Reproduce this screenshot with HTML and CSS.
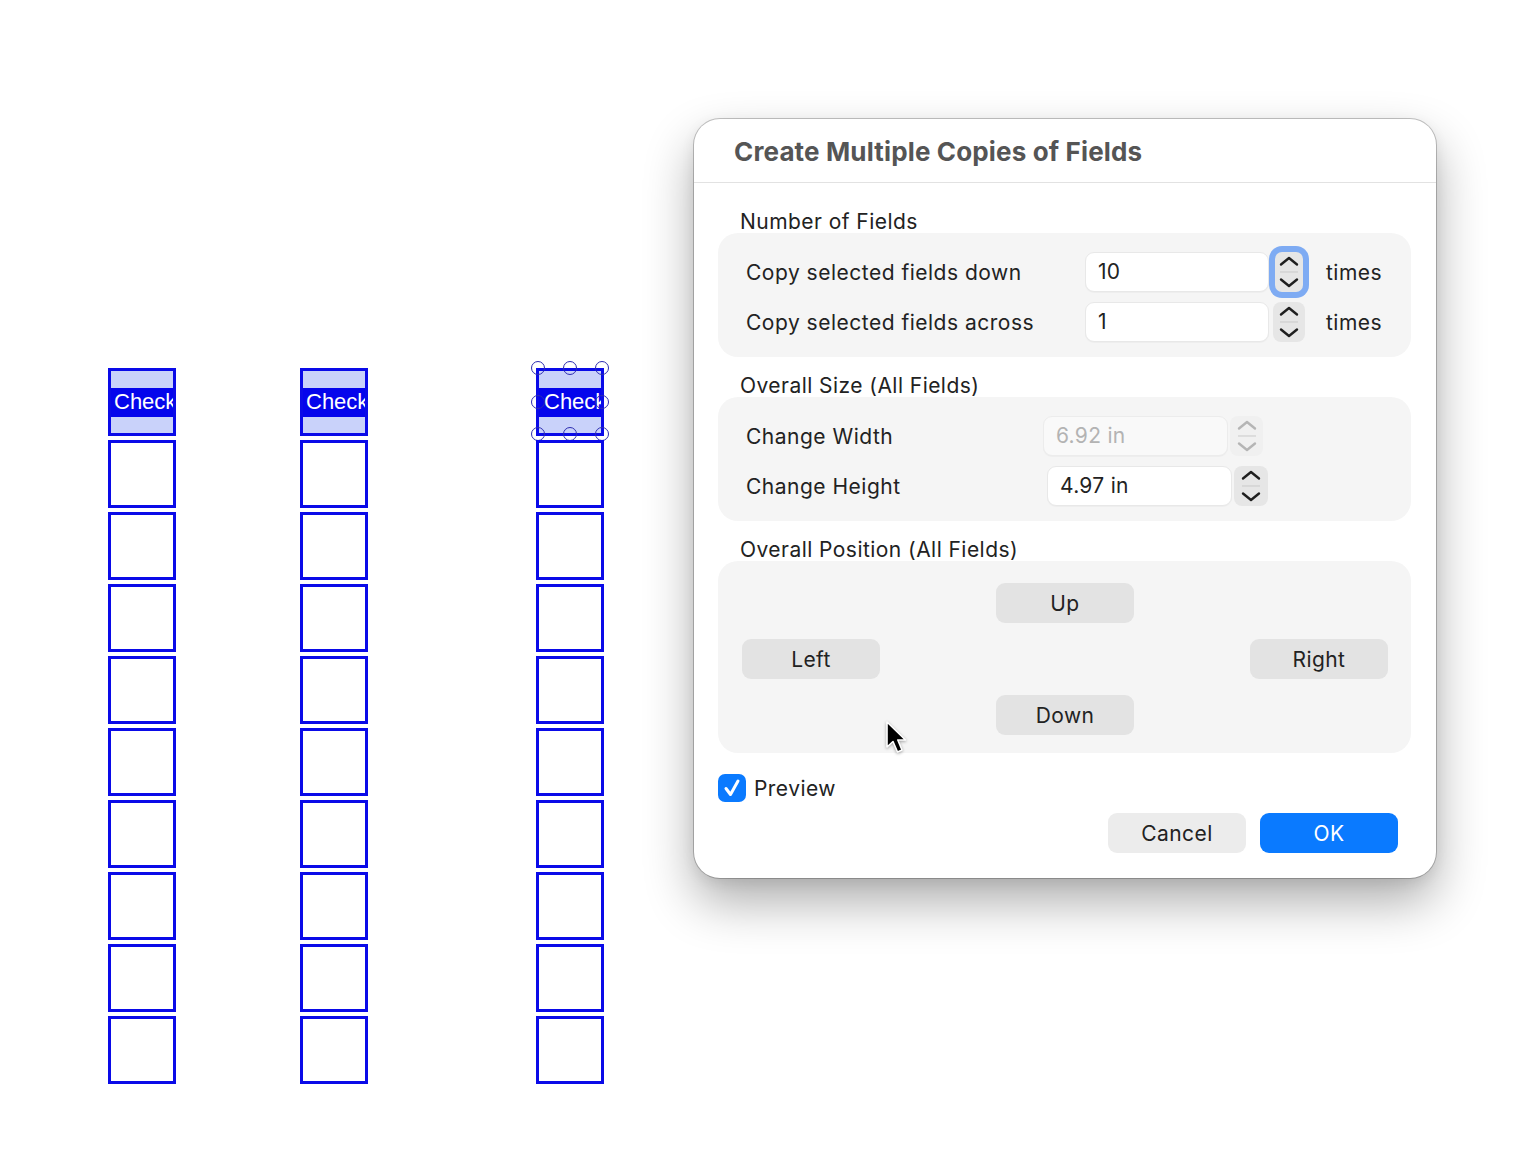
FILE: index.html
```html
<!DOCTYPE html>
<html>
<head>
<meta charset="utf-8">
<link rel="stylesheet" href="styles.css">
</head>
<body>
<div class="canvas">
  <div class="col col-1">
    <div class="field sel"><div class="band"></div><div class="cap">Check</div><div class="band"></div></div>
    <div class="field"></div><div class="field"></div><div class="field"></div><div class="field"></div>
    <div class="field"></div><div class="field"></div><div class="field"></div><div class="field"></div><div class="field"></div>
  </div>
  <div class="col col-2">
    <div class="field sel"><div class="band"></div><div class="cap">Check</div><div class="band"></div></div>
    <div class="field"></div><div class="field"></div><div class="field"></div><div class="field"></div>
    <div class="field"></div><div class="field"></div><div class="field"></div><div class="field"></div><div class="field"></div>
  </div>
  <div class="col col-3">
    <div class="field sel handles"><div class="band"></div><div class="cap cap-3">Check</div><div class="band"></div>
      <span class="h h-tl"></span><span class="h h-tc"></span><span class="h h-tr"></span>
      <span class="h h-ml"></span><span class="h h-mr"></span>
      <span class="h h-bl"></span><span class="h h-bc"></span><span class="h h-br"></span>
    </div>
    <div class="field"></div><div class="field"></div><div class="field"></div><div class="field"></div>
    <div class="field"></div><div class="field"></div><div class="field"></div><div class="field"></div><div class="field"></div>
  </div>

  <div class="dialog">
    <div class="dlg-head">Create Multiple Copies of Fields</div>
    <div class="dlg-body">
      <div class="sec-label">Number of Fields</div>
      <div class="group group-num">
        <div class="row">
          <span class="row-label">Copy selected fields down</span>
          <span class="input">10</span>
          <span class="stepper focus">
            <svg width="24" height="38" viewBox="0 0 24 38"><path d="M4 11.5 L12 5 L20 11.5" class="chev"/><line x1="3" y1="19" x2="21" y2="19" class="div"/><path d="M4 26.5 L12 33 L20 26.5" class="chev"/></svg>
          </span>
          <span class="unit">times</span>
        </div>
        <div class="row">
          <span class="row-label">Copy selected fields across</span>
          <span class="input">1</span>
          <span class="stepper">
            <svg width="24" height="38" viewBox="0 0 24 38"><path d="M4 11.5 L12 5 L20 11.5" class="chev"/><line x1="3" y1="19" x2="21" y2="19" class="div"/><path d="M4 26.5 L12 33 L20 26.5" class="chev"/></svg>
          </span>
          <span class="unit">times</span>
        </div>
      </div>

      <div class="sec-label">Overall Size (All Fields)</div>
      <div class="group group-size">
        <div class="row">
          <span class="row-label">Change Width</span>
          <span class="input disabled">6.92 in</span>
          <span class="stepper disabled">
            <svg width="24" height="38" viewBox="0 0 24 38"><path d="M4 11.5 L12 5 L20 11.5" class="chev"/><line x1="3" y1="19" x2="21" y2="19" class="div"/><path d="M4 26.5 L12 33 L20 26.5" class="chev"/></svg>
          </span>
        </div>
        <div class="row shift">
          <span class="row-label">Change Height</span>
          <span class="input">4.97 in</span>
          <span class="stepper">
            <svg width="24" height="38" viewBox="0 0 24 38"><path d="M4 11.5 L12 5 L20 11.5" class="chev"/><line x1="3" y1="19" x2="21" y2="19" class="div"/><path d="M4 26.5 L12 33 L20 26.5" class="chev"/></svg>
          </span>
        </div>
      </div>

      <div class="sec-label">Overall Position (All Fields)</div>
      <div class="group group-pos">
        <button class="btn b-up">Up</button>
        <button class="btn b-left">Left</button>
        <button class="btn b-right">Right</button>
        <button class="btn b-down">Down</button>
      </div>

      <div class="preview">
        <span class="check">
          <svg width="28" height="28" viewBox="0 0 28 28"><path d="M8 14.5 L12.5 20.5 L20 7" fill="none" stroke="#fff" stroke-width="3" stroke-linecap="round" stroke-linejoin="round"/></svg>
        </span>
        <span class="preview-label">Preview</span>
      </div>

      <div class="actions">
        <button class="btn btn-cancel">Cancel</button>
        <button class="btn btn-ok">OK</button>
      </div>
    </div>
  </div>

  <svg class="cursor" width="24" height="38" viewBox="0 0 24 38">
    <path d="M2 1 L2 26 L8 20.5 L12.5 31 L17 29 L12.8 19 L20.5 19 Z" fill="#000" stroke="#fff" stroke-width="1.6" stroke-linejoin="round"/>
  </svg>
</div>
</body>
</html>
```

FILE: styles.css
```css
* { box-sizing: border-box; }
html, body { margin: 0; padding: 0; background: #fff; }
body { width: 1516px; height: 1166px; overflow: hidden; font-family: "Inter", "Noto Sans", sans-serif; color: #1f1f1f; }

.canvas { position: relative; width: 1516px; height: 1166px; }

/* layout canvas fields */
.col { position: absolute; top: 368px; display: flex; flex-direction: column; gap: 4px; }
.col-1 { left: 108px; }
.col-2 { left: 300px; }
.col-3 { left: 536px; }

.field { position: relative; width: 68px; height: 68px; border: 3px solid #0a0ae8; background: #fff; display: flex; flex-direction: column; }
.field.sel { background: #c9d2fa; }
.band { height: 17px; background: #c9d2fa; }
.band + .cap + .band { height: 16px; }
.cap { height: 29px; background: #0505ec; color: #fff; font-family: "Liberation Sans", Arial, sans-serif; font-size: 22px; line-height: 27px; padding-left: 3px; white-space: nowrap; overflow: hidden; }
.cap-3 { padding-left: 5px; }

.h { position: absolute; width: 14px; height: 14px; border: 1.5px solid #2c2cb0; border-radius: 50%; background: transparent; }
.h-tl { left: -8px; top: -10px; }
.h-tc { left: 24px; top: -10px; }
.h-tr { right: -8px; top: -10px; }
.h-ml { left: -8px; top: 24px; }
.h-mr { right: -8px; top: 24px; }
.h-bl { left: -8px; bottom: -8px; }
.h-bc { left: 24px; bottom: -8px; }
.h-br { right: -8px; bottom: -8px; }

/* dialog */
.dialog { position: absolute; left: 694px; top: 119px; width: 742px; height: 759px; background: #fff; border-radius: 26px;
  box-shadow: 0 0 0 1px rgba(0,0,0,0.22), 0 24px 50px rgba(0,0,0,0.32), 0 4px 14px rgba(0,0,0,0.08); display: flex; flex-direction: column; }
.dlg-head { height: 64px; padding: 17px 0 0 40px; font-size: 26px; font-weight: 700; color: #555; letter-spacing: 0.15px; border-bottom: 1px solid #e2e2e2; line-height: 32px; }
.dlg-body { padding: 28px 25px 0 24px; display: flex; flex-direction: column; }

.sec-label { font-size: 21px; line-height: 22px; padding-left: 22px; color: #222; letter-spacing: 0.45px; }
.group { background: #f5f5f5; border-radius: 20px; margin-bottom: 18px; }
.group-num { padding: 14px 28px 10px 28px; }
.group-size { padding: 14px 148px 10px 28px; }

.row { height: 50px; display: flex; align-items: center; }
.row-label { flex: 1; font-size: 21px; color: #222; letter-spacing: 0.5px; }
.input { flex: none; width: 184px; height: 40px; background: #fff; border: 1px solid #e8e8e8; border-radius: 9px; font-size: 21px; line-height: 38px; padding-left: 12px; color: #222; letter-spacing: 0.3px; box-shadow: 0 1px 1px rgba(0,0,0,0.03); }
.group-size .input { width: 185px; }
.input.disabled { background: #f9f9f9; color: #b3b3b3; border-color: #ececec; }
.stepper { flex: none; width: 32px; height: 40px; margin-left: 4px; background: #e6e6e6; border-radius: 8px; display: flex; align-items: center; justify-content: center; }
.group-size .stepper { margin-left: 2px; width: 33px; }
.group-size .shift .stepper { width: 34px; }
.stepper.focus { width: 28px; margin-left: 6px; margin-right: 2px; box-shadow: 0 0 0 6px #7eabf3; border-radius: 7px; }
.stepper .chev { fill: none; stroke: #1f1f1f; stroke-width: 2.4; stroke-linecap: round; stroke-linejoin: round; }
.stepper .div { stroke: #c9c9c9; stroke-width: 1; }
.stepper.disabled { background: #f0f0f0; }
.stepper.disabled .chev { stroke: #b5b5b5; }
.unit { flex: none; width: 57px; margin-left: 21px; font-size: 21px; color: #222; letter-spacing: 0.5px; }
.shift { margin-right: -5px; }

.group-pos { display: grid; grid-template-columns: 138px 138px 138px; grid-template-rows: 40px 40px 40px; row-gap: 16px; justify-content: space-between; padding: 22px 23px 18px 24px; margin-bottom: 21px; }
.btn { border: 0; font-family: inherit; font-size: 21px; color: #222; background: #e3e3e3; border-radius: 9px; height: 40px; width: 138px; padding: 0; letter-spacing: 0.4px; }
.b-up { grid-column: 2; grid-row: 1; }
.b-left { grid-column: 1; grid-row: 2; }
.b-right { grid-column: 3; grid-row: 2; }
.b-down { grid-column: 2; grid-row: 3; }

.preview { display: flex; align-items: center; height: 28px; gap: 8px; }
.check { width: 28px; height: 28px; background: #0a7aff; border-radius: 7px; display: flex; }
.preview-label { font-size: 21px; color: #222; letter-spacing: 0.45px; }

.actions { display: flex; justify-content: flex-end; gap: 14px; margin-top: 11px; padding-right: 13px; }
.btn-cancel { background: #ececec; }
.btn-ok { background: #0a7aff; color: #fff; }

.cursor { position: absolute; left: 885px; top: 721px; filter: drop-shadow(0 1px 1.5px rgba(0,0,0,0.35)); }
```
